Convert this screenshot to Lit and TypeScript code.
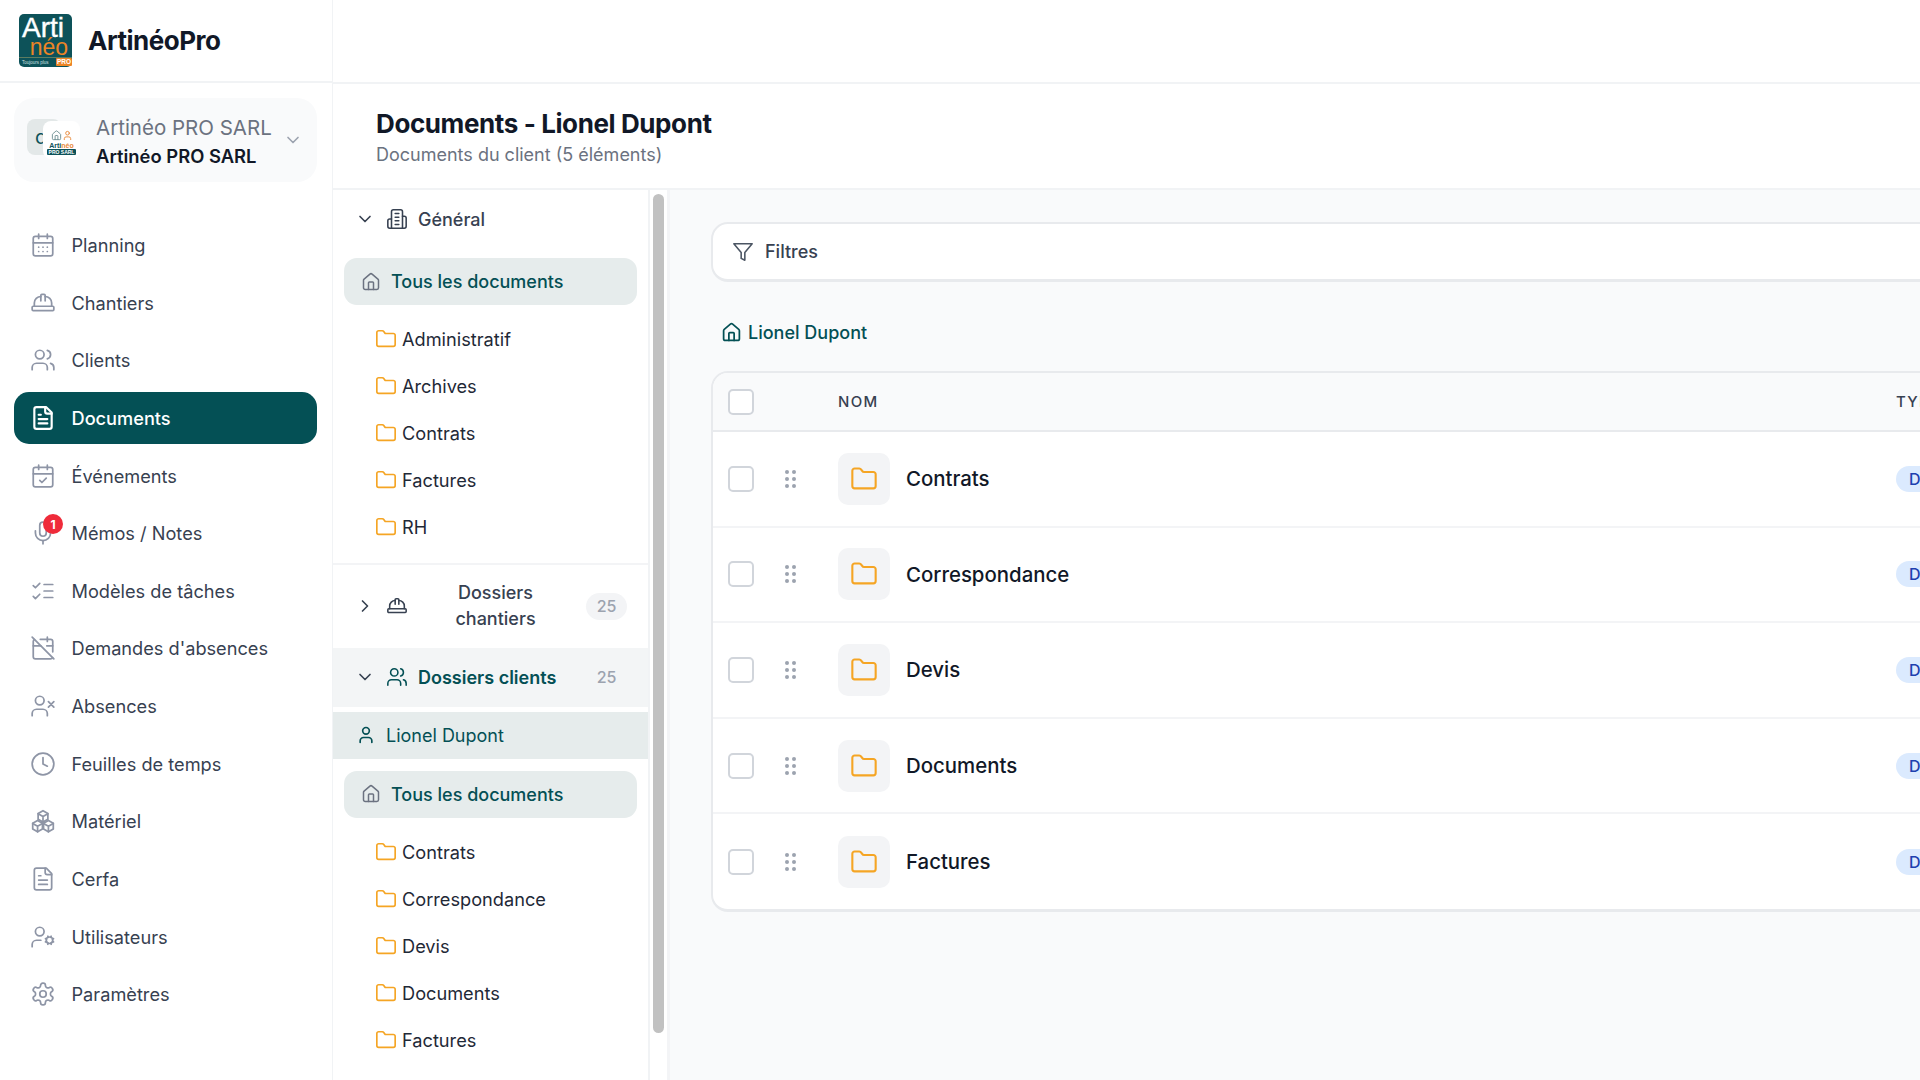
import { LitElement, css, html, svg } from "lit";
import { customElement } from "lit/decorators.js";

const folderPath = svg`<path d="M20 20a2 2 0 0 0 2-2V8a2 2 0 0 0-2-2h-7.9a2 2 0 0 1-1.69-.9L9.6 3.9A2 2 0 0 0 7.93 3H4a2 2 0 0 0-2 2v13a2 2 0 0 0 2 2Z"/>`;

const icons: Record<string, unknown> = {
  planning: svg`<path d="M8 2v4M16 2v4"/><rect x="3" y="4" width="18" height="18" rx="2"/><path d="M3 10h18M8 14h.01M12 14h.01M16 14h.01M8 18h.01M12 18h.01M16 18h.01"/>`,
  hat: svg`<path d="M10 10V5a1 1 0 0 1 1-1h2a1 1 0 0 1 1 1v5"/><path d="M14 6a6 6 0 0 1 6 6v3"/><path d="M4 15v-3a6 6 0 0 1 6-6"/><rect x="2" y="15" width="20" height="4" rx="1"/>`,
  users: svg`<path d="M16 21v-2a4 4 0 0 0-4-4H6a4 4 0 0 0-4 4v2"/><circle cx="9" cy="7" r="4"/><path d="M22 21v-2a4 4 0 0 0-3-3.87"/><path d="M16 3.13a4 4 0 0 1 0 7.75"/>`,
  file: svg`<path d="M15 2H6a2 2 0 0 0-2 2v16a2 2 0 0 0 2 2h12a2 2 0 0 0 2-2V7Z"/><path d="M14 2v4a2 2 0 0 0 2 2h4"/><path d="M10 9H8M16 13H8M16 17H8"/>`,
  event: svg`<path d="M8 2v4M16 2v4"/><rect x="3" y="4" width="18" height="18" rx="2"/><path d="M3 10h18"/><path d="m9 16 2 2 4-4"/>`,
  mic: svg`<path d="M12 2a3 3 0 0 0-3 3v7a3 3 0 0 0 6 0V5a3 3 0 0 0-3-3Z"/><path d="M19 10v2a7 7 0 0 1-14 0v-2"/><path d="M12 19v3"/>`,
  tasks: svg`<path d="m3 17 2 2 4-4"/><path d="m3 7 2 2 4-4"/><path d="M13 6h8M13 12h8M13 18h8"/>`,
  calOff: svg`<path d="M4.2 4.2A2 2 0 0 0 3 6v14a2 2 0 0 0 2 2h14a2 2 0 0 0 1.82-1.18"/><path d="M21 15.5V6a2 2 0 0 0-2-2H9.5"/><path d="M16 2v4M3 10h7M21 10h-5.5"/><path d="m2 2 20 20"/>`,
  userX: svg`<path d="M16 21v-2a4 4 0 0 0-4-4H6a4 4 0 0 0-4 4v2"/><circle cx="9" cy="7" r="4"/><path d="m17 8 5 5M22 8l-5 5"/>`,
  clock: svg`<circle cx="12" cy="12" r="10"/><path d="M12 6v6l4 2"/>`,
  boxes: svg`<path d="M12 2.500l4.500 2.600v5.200L12 13l-4.500-2.700V5.100z"/><path d="M7.500 5.300 12 7.900l4.500-2.600M12 7.900V13"/><path d="M7 11.500l4.500 2.600v5.200L7 22l-4.500-2.700v-5.200z"/><path d="M2.500 14.300 7 16.900l4.500-2.600M7 16.900V22"/><path d="M17 11.500l4.500 2.600v5.200L17 22l-4.500-2.700v-5.200z"/><path d="M12.500 14.300l4.500 2.600 4.500-2.600M17 16.900V22"/>`,
  userCog: svg`<circle cx="9" cy="7" r="4"/><path d="M10 15H6a4 4 0 0 0-4 4v2"/><circle cx="18" cy="15" r="3"/><path d="m14.305 16.530.923-.382M15.228 13.852l-.923-.383M16.852 12.228l-.383-.923M16.852 17.772l-.383.924M19.148 12.228l.383-.923M19.530 18.696l-.382-.924M20.772 13.852l.924-.383M20.772 16.148l.924.383"/>`,
  settings: svg`<path d="M12.220 2h-.44a2 2 0 0 0-2 2v.18a2 2 0 0 1-1 1.730l-.43.25a2 2 0 0 1-2 0l-.15-.08a2 2 0 0 0-2.730.73l-.22.38a2 2 0 0 0 .73 2.730l.15.1a2 2 0 0 1 1 1.720v.51a2 2 0 0 1-1 1.740l-.15.09a2 2 0 0 0-.73 2.730l.22.38a2 2 0 0 0 2.730.73l.15-.08a2 2 0 0 1 2 0l.43.25a2 2 0 0 1 1 1.730V20a2 2 0 0 0 2 2h.44a2 2 0 0 0 2-2v-.18a2 2 0 0 1 1-1.730l.43-.25a2 2 0 0 1 2 0l.15.08a2 2 0 0 0 2.730-.73l.22-.39a2 2 0 0 0-.73-2.730l-.15-.08a2 2 0 0 1-1-1.740v-.5a2 2 0 0 1 1-1.740l.15-.09a2 2 0 0 0 .73-2.730l-.22-.38a2 2 0 0 0-2.730-.73l-.15.08a2 2 0 0 1-2 0l-.43-.25a2 2 0 0 1-1-1.730V4a2 2 0 0 0-2-2z"/><circle cx="12" cy="12" r="3"/>`,
  home: svg`<path d="M15 21v-8a1 1 0 0 0-1-1h-4a1 1 0 0 0-1 1v8"/><path d="M3 10a2 2 0 0 1 .709-1.528l7-5.999a2 2 0 0 1 2.582 0l7 5.999A2 2 0 0 1 21 10v9a2 2 0 0 1-2 2H5a2 2 0 0 1-2-2z"/>`,
  building: svg`<path d="M6 22V4a2 2 0 0 1 2-2h8a2 2 0 0 1 2 2v18Z"/><path d="M6 12H4a2 2 0 0 0-2 2v6a2 2 0 0 0 2 2h2"/><path d="M18 9h2a2 2 0 0 1 2 2v9a2 2 0 0 1-2 2h-2"/><path d="M10 6h4M10 10h4M10 14h4M10 18h4"/>`,
  filter: svg`<path d="M22 3H2l8 9.460V19l4 2v-8.540z"/>`,
  user: svg`<path d="M19 21v-2a4 4 0 0 0-4-4H9a4 4 0 0 0-4 4v2"/><circle cx="12" cy="7" r="4"/>`,
  down: svg`<path d="m6 9 6 6 6-6"/>`,
  right: svg`<path d="m9 18 6-6-6-6"/>`,
  folder: folderPath,
};

const icon = (name: string, cls = "") =>
  html`<svg class="ic ${cls}" viewBox="0 0 24 24" fill="none" stroke="currentColor" stroke-width="2" stroke-linecap="round" stroke-linejoin="round">${icons[name]}</svg>`;

const navItems = [
  ["planning", "Planning"],
  ["hat", "Chantiers"],
  ["users", "Clients"],
  ["file", "Documents"],
  ["event", "Événements"],
  ["mic", "Mémos / Notes"],
  ["tasks", "Modèles de tâches"],
  ["calOff", "Demandes d'absences"],
  ["userX", "Absences"],
  ["clock", "Feuilles de temps"],
  ["boxes", "Matériel"],
  ["file", "Cerfa"],
  ["userCog", "Utilisateurs"],
  ["settings", "Paramètres"],
];

const generalFolders = ["Administratif", "Archives", "Contrats", "Factures", "RH"];
const clientFolders = ["Contrats", "Correspondance", "Devis", "Documents", "Factures"];

@customElement("app-root")
export class AppRoot extends LitElement {
  static styles = css`
    :host {
      display: flex;
      width: 1920px;
      height: 1080px;
      overflow: hidden;
      background: #fff;
      font-family: Inter, "Liberation Sans", sans-serif;
      color: #374151;
    }
    * {
      box-sizing: border-box;
    }
    .ic {
      display: block;
      flex: none;
      width: 24px;
      height: 24px;
    }

    /* sidebar */
    aside {
      flex: none;
      width: 333px;
      border-right: 1px solid #f1f3f5;
      display: flex;
      flex-direction: column;
    }
    .brand {
      height: 83px;
      flex: none;
      border-bottom: 2px solid #f1f3f5;
      display: flex;
      align-items: center;
      gap: 16px;
      padding: 0 0 0 19px;
    }
    .logo {
      flex: none;
      width: 53px;
      height: 53px;
      border-radius: 5px;
      background: #0d5259;
      color: #fff;
      display: flex;
      flex-direction: column;
      font-family: "Liberation Sans", sans-serif;
    }
    .logo .arti {
      font-size: 28px;
      line-height: 24px;
      margin: 2px 0 0 3px;
      -webkit-text-stroke: 0.4px #fff;
    }
    .logo .neo {
      align-self: flex-end;
      font-size: 23px;
      line-height: 15px;
      margin-right: 4px;
      color: #ed8526;
    }
    .logo .tag {
      margin-top: auto;
      align-self: stretch;
      display: flex;
      justify-content: space-between;
      align-items: center;
      padding-left: 3px;
      height: 9px;
      margin-bottom: 1px;
      font-size: 4.500px;
      color: #cfe0e0;
      border-top: 1px solid #5d7c60;
    }
    .logo .tag b {
      background: #ed8526;
      color: #fff;
      font-size: 6.500px;
      line-height: 8px;
      padding: 0 1px;
      border-radius: 1px;
    }
    .brand-name {
      font-size: 26px;
      font-weight: 700;
      color: #111827;
      letter-spacing: -0.5px;
    }
    .company {
      margin: 15px 15px 0 14px;
      height: 84px;
      flex: none;
      border-radius: 20px;
      background: #f9fafb;
      display: flex;
      align-items: center;
      padding-left: 13px;
      position: relative;
    }
    .avatars {
      position: relative;
      flex: none;
      width: 56px;
      height: 40px;
      margin-top: -2px;
      margin-right: 13px;
    }
    .av-back {
      position: absolute;
      left: 0;
      top: 0;
      width: 34px;
      height: 36px;
      border-radius: 8px;
      background: #e3e8e8;
      color: #0d5259;
      font-size: 20px;
      line-height: 36px;
      padding-left: 8px;
    }
    .av-front {
      position: absolute;
      left: 16px;
      top: 2px;
      width: 37px;
      height: 38px;
      border-radius: 8px;
      background: #fff;
      display: flex;
      flex-direction: column;
      align-items: center;
      justify-content: flex-end;
      font-family: "Liberation Sans", sans-serif;
      padding-bottom: 4px;
    }
    .av-pics {
      display: flex;
    }
    .av-pics .ic {
      width: 11px;
      height: 13px;
      color: #6f8f93;
    }
    .av-pics .ic + .ic {
      color: #e8893a;
    }
    .av-front .t {
      font-size: 7px;
      line-height: 7px;
      font-weight: 700;
      color: #0d5259;
    }
    .av-front .t i {
      color: #e8893a;
      font-style: normal;
    }
    .av-front .p {
      font-size: 5px;
      line-height: 6px;
      font-weight: 700;
      color: #fff;
      background: #0d5259;
      padding: 0 2px;
      border-radius: 1px;
    }
    .company-text {
      flex: 1;
      min-width: 0;
      white-space: nowrap;
      padding-top: 3px;
    }
    .company-text .a {
      font-size: 20.500px;
      line-height: 28px;
      color: #6b7280;
    }
    .company-text .b {
      font-size: 18.400px;
      line-height: 28px;
      font-weight: 600;
      color: #111827;
    }
    .company > .ic {
      width: 20px;
      height: 20px;
      color: #9ca3af;
      margin-right: 14px;
    }
    nav {
      margin-top: 37px;
      padding: 0 15px 0 14px;
      display: flex;
      flex-direction: column;
      gap: 5.650px;
    }
    .nav-item {
      height: 52px;
      border-radius: 15px;
      display: flex;
      align-items: center;
      gap: 15.500px;
      padding-left: 16px;
      font-size: 18.200px;
      color: #374151;
      position: relative;
    }
    .nav-item .ic {
      width: 26px;
      height: 26px;
      stroke-width: 1.600;
      color: #8e95a6;
    }
    .nav-item.active {
      background: #045055;
      color: #fff;
      font-weight: 500;
    }
    .nav-item.active .ic {
      color: #fff;
      stroke-width: 2;
    }
    .dot {
      position: absolute;
      left: 29px;
      top: 7px;
      width: 20px;
      height: 20px;
      border-radius: 50%;
      background: #ef2b3a;
      color: #fff;
      font-size: 12px;
      font-weight: 700;
      display: flex;
      align-items: center;
      justify-content: center;
    }

    /* main */
    main {
      flex: 1;
      min-width: 0;
      display: flex;
      flex-direction: column;
    }
    .topbar {
      height: 84px;
      flex: none;
      border-bottom: 2px solid #f1f3f5;
    }
    .head {
      height: 106px;
      flex: none;
      border-bottom: 2px solid #f1f3f5;
      padding: 23px 0 0 43px;
    }
    h1 {
      margin: 0;
      font-size: 26px;
      line-height: 34px;
      font-weight: 700;
      color: #111827;
      letter-spacing: -0.4px;
    }
    .sub {
      font-size: 18px;
      line-height: 28px;
      color: #6b7280;
    }
    .body {
      flex: 1;
      min-height: 0;
      display: flex;
    }
    .tree {
      flex: none;
      width: 317px;
      overflow: hidden;
      padding-top: 4px;
      border-right: 2px solid #f1f3f5;
    }
    .scroll {
      flex: none;
      width: 20px;
      padding: 4px 3px 0 3px;
      border-right: 3px solid #f3f4f6;
    }
    .thumb {
      width: 11px;
      height: 839px;
      border-radius: 6px;
      background: #c1c1c1;
    }
    .sec {
      display: flex;
      align-items: center;
      padding-left: 22px;
      font-size: 18px;
      font-weight: 500;
      color: #374151;
    }
    .sec .chev {
      width: 20px;
      height: 20px;
      color: #374151;
      margin-right: 10.500px;
    }
    .sec .si {
      width: 22px;
      height: 22px;
      stroke-width: 1.700;
      margin-right: 10.500px;
    }
    .sec.general {
      height: 50px;
    }
    .all {
      margin: 14px 11px 0 11px;
      height: 47px;
      border-radius: 13px;
      background: #e6ecec;
      display: flex;
      align-items: center;
      gap: 10px;
      padding-left: 17px;
      font-size: 18px;
      font-weight: 450;
      color: #045055;
    }
    .all .ic {
      width: 20px;
      height: 20px;
      color: #6b7280;
      stroke-width: 1.800;
    }
    .folders {
      padding-top: 10px;
    }
    .fo {
      height: 47.200px;
      display: flex;
      align-items: center;
      gap: 5px;
      padding-left: 42px;
      font-size: 18.200px;
      color: #1f2937;
    }
    .fo .ic {
      width: 22px;
      height: 22px;
      color: #f5a524;
      stroke-width: 1.800;
    }
    .chantiers {
      margin-top: 12px;
      height: 85px;
      border-top: 2px solid #f3f4f6;
    }
    .chantiers .lbl {
      flex: 1;
      text-align: center;
      line-height: 26px;
      padding: 0 13px 0 0;
    }
    .count {
      flex: none;
      width: 41px;
      height: 27px;
      border-radius: 14px;
      margin-right: 21px;
      background: #f3f4f6;
      color: #9ca3af;
      font-size: 16px;
      font-weight: 500;
      display: flex;
      align-items: center;
      justify-content: center;
    }
    .clients {
      height: 59px;
      background: #f3f5f6;
      color: #045055;
      font-weight: 600;
    }
    .clients .si {
      color: #045055;
    }
    .clients .lbl {
      flex: 1;
    }
    .clients .count {
      background: transparent;
    }
    .lionel {
      margin-top: 5px;
      height: 47px;
      background: #e6ecec;
      display: flex;
      align-items: center;
      gap: 10px;
      padding-left: 23px;
      font-size: 18px;
      color: #045055;
    }
    .lionel .ic {
      width: 20px;
      height: 20px;
    }
    .lionel + .all {
      margin-top: 12px;
    }

    /* content */
    .content {
      flex: 1;
      min-width: 0;
      background: #f9fafb;
      padding: 32px 0 0 41px;
      overflow: hidden;
    }
    .filter {
      width: 1500px;
      height: 60px;
      background: #fff;
      border: 2px solid #e8eaed;
      border-bottom-width: 3px;
      border-radius: 17px;
      display: flex;
      align-items: center;
      gap: 11px;
      padding-left: 19px;
      font-size: 18px;
      font-weight: 450;
      color: #374151;
    }
    .filter .ic {
      width: 22px;
      height: 22px;
      color: #4b5563;
      stroke-width: 1.700;
    }
    .crumb {
      height: 89px;
      padding-top: 12px;
      display: flex;
      align-items: center;
      gap: 6px;
      padding-left: 10px;
      font-size: 18px;
      font-weight: 450;
      color: #045055;
    }
    .crumb .ic {
      width: 21px;
      height: 21px;
    }
    .table {
      width: 1500px;
      background: #fff;
      border: 2px solid #e8eaed;
      border-bottom-width: 3px;
      border-radius: 17px;
      overflow: hidden;
    }
    .row {
      display: grid;
      grid-template-columns: 58px 52px 1058px 1fr;
      align-items: center;
      padding-left: 15px;
      height: 95.600px;
      border-bottom: 2px solid #f3f4f6;
    }
    .row:last-child {
      border-bottom: 0;
      height: 94.600px;
    }
    .row.hdr {
      height: 59px;
      background: #f9fafb;
      border-bottom: 2px solid #e8eaed;
      font-size: 15px;
      font-weight: 500;
      letter-spacing: 1.300px;
      color: #374151;
    }
    .check {
      width: 26px;
      height: 26px;
      border: 2.500px solid #d1d5db;
      border-radius: 5px;
      background: #fff;
    }
    .grip {
      display: grid;
      grid-template-columns: 4px 4px;
      gap: 3px;
      width: 11px;
      margin-left: -1px;
    }
    .grip i {
      width: 4px;
      height: 4px;
      border-radius: 50%;
      background: #9ca3af;
    }
    .name {
      display: flex;
      align-items: center;
      gap: 16px;
      font-size: 20.400px;
      font-weight: 450;
      color: #111827;
    }
    .tile {
      width: 52px;
      height: 52px;
      border-radius: 10px;
      background: #f3f4f6;
      display: flex;
      align-items: center;
      justify-content: center;
    }
    .tile .ic {
      width: 28px;
      height: 28px;
      color: #f5a524;
      stroke-width: 1.800;
    }
    .badge {
      display: inline-block;
      height: 26px;
      line-height: 26px;
      border-radius: 13px;
      padding: 0 13px;
      background: #dbeafe;
      color: #1e40af;
      font-size: 16px;
      font-weight: 500;
    }
  `;

  private folderList(names: string[]) {
    return html`<div class="folders">
      ${names.map((n) => html`<div class="fo">${icon("folder")}<span>${n}</span></div>`)}
    </div>`;
  }

  private allDocs() {
    return html`<div class="all">${icon("home")}<span>Tous les documents</span></div>`;
  }

  private renderSidebar() {
    return html`<aside>
      <div class="brand">
        <div class="logo">
          <span class="arti">Arti</span>
          <span class="neo">néo</span>
          <div class="tag"><span>Toujours plus</span><b>PRO</b></div>
        </div>
        <span class="brand-name">ArtinéoPro</span>
      </div>
      <div class="company">
        <div class="avatars">
          <div class="av-back">d</div>
          <div class="av-front">
            <div class="av-pics">${icon("home")}${icon("user")}</div>
            <span class="t">Arti<i>néo</i></span>
            <span class="p">PRO SARL</span>
          </div>
        </div>
        <div class="company-text">
          <div class="a">Artinéo PRO SARL</div>
          <div class="b">Artinéo PRO SARL</div>
        </div>
        ${icon("down")}
      </div>
      <nav>
        ${navItems.map(
          ([ic, label]) => html`<div class="nav-item ${label === "Documents" ? "active" : ""}">
            ${icon(ic)}<span>${label}</span>
            ${ic === "mic" ? html`<span class="dot">1</span>` : ""}
          </div>`
        )}
      </nav>
    </aside>`;
  }

  private renderTree() {
    return html`<div class="tree">
      <div class="sec general">${icon("down", "chev")}${icon("building", "si")}<span>Général</span></div>
      ${this.allDocs()} ${this.folderList(generalFolders)}
      <div class="sec chantiers">
        ${icon("right", "chev")}${icon("hat", "si")}
        <span class="lbl">Dossiers chantiers</span>
        <span class="count">25</span>
      </div>
      <div class="sec clients">
        ${icon("down", "chev")}${icon("users", "si")}
        <span class="lbl">Dossiers clients</span>
        <span class="count">25</span>
      </div>
      <div class="lionel">${icon("user")}<span>Lionel Dupont</span></div>
      ${this.allDocs()} ${this.folderList(clientFolders)}
    </div>`;
  }

  private renderTable() {
    return html`<div class="table">
      <div class="row hdr">
        <div class="check"></div>
        <div></div>
        <div>NOM</div>
        <div>TYPE</div>
      </div>
      ${clientFolders.map(
        (n) => html`<div class="row">
          <div class="check"></div>
          <div class="grip">${[0, 1, 2, 3, 4, 5].map(() => html`<i></i>`)}</div>
          <div class="name"><div class="tile">${icon("folder")}</div><span>${n}</span></div>
          <div><span class="badge">Dossier</span></div>
        </div>`
      )}
    </div>`;
  }

  render() {
    return html`
      ${this.renderSidebar()}
      <main>
        <div class="topbar"></div>
        <div class="head">
          <h1>Documents - Lionel Dupont</h1>
          <div class="sub">Documents du client (5 éléments)</div>
        </div>
        <div class="body">
          ${this.renderTree()}
          <div class="scroll"><div class="thumb"></div></div>
          <div class="content">
            <div class="filter">${icon("filter")}<span>Filtres</span></div>
            <div class="crumb">${icon("home")}<span>Lionel Dupont</span></div>
            ${this.renderTable()}
          </div>
        </div>
      </main>
    `;
  }
}
